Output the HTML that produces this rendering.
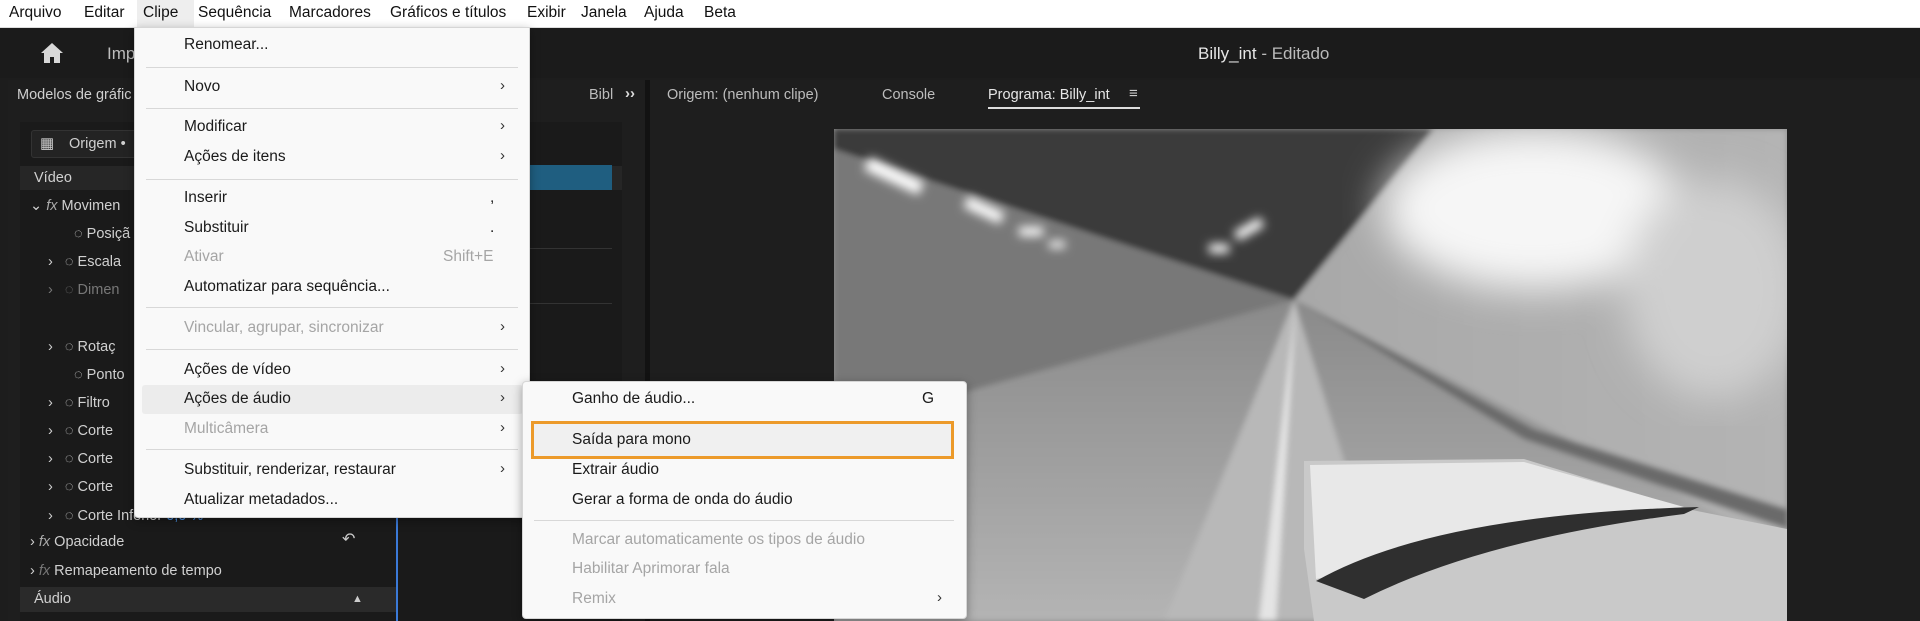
<!DOCTYPE html>
<html><head><meta charset="utf-8"><style>
*{margin:0;padding:0;box-sizing:border-box}
body{width:1920px;height:621px;overflow:hidden;background:#1d1d1d;font-family:"Liberation Sans",sans-serif;position:relative}
.a{position:absolute;white-space:nowrap;line-height:20px}
.mb{position:absolute;left:0;top:0;width:1920px;height:28px;background:#fff;border-bottom:1px solid #ddd}
.mb span{position:absolute;top:4px;font-size:15.5px;color:#111}
.menu{position:absolute;background:#f9f9f9;border:1px solid #d6d6d6;box-shadow:0 3px 10px rgba(0,0,0,.35);border-radius:4px}
.mi{position:absolute;font-size:15.5px;color:#1a1a1a;line-height:20px}
.dis{color:#a5a5a5}
.sep{position:absolute;height:1px;background:#d8d8d8}
.chev{position:absolute;font-size:15px;color:#333}
.lp{color:#d0d0d0;font-size:14.5px}
</style></head><body>
<div style="position:absolute;left:0;top:28px;width:1920px;height:50px;background:#1b1b1b"></div>
<svg class="a" style="left:40px;top:42px" width="24" height="22" viewBox="0 0 24 22"><path d="M12 1 L1 11 H4 V21 H10 V15 H14 V21 H20 V11 H23 Z" fill="#d8d8d8"/></svg>
<div class="a" style="left:107px;top:44px;color:#bdbdbd;font-size:17px">Imp</div>
<div class="a" style="left:1198px;top:44px;color:#e6e6e6;font-size:17px">Billy_int <span style="color:#bbb">- Editado</span></div>
<div style="position:absolute;left:8px;top:80px;width:640px;height:541px;background:#1e1e1e"></div>
<div style="position:absolute;left:20px;top:122px;width:602px;height:499px;background:#1a1a1a"></div>
<div style="position:absolute;left:650px;top:80px;width:1270px;height:541px;background:#1e1e1e"></div>
<div style="position:absolute;left:645px;top:80px;width:5px;height:541px;background:#121212"></div>
<div class="a" style="left:17px;top:85px;color:#cfcfcf;font-size:14.5px">Modelos de gráfic</div>
<div class="a" style="left:589px;top:85px;color:#bdbdbd;font-size:14.5px">Bibl</div>
<div class="a" style="left:625px;top:84px;color:#ddd;font-size:15px;font-weight:bold">››</div>
<div class="a" style="left:667px;top:85px;color:#bdbdbd;font-size:14.5px">Origem: (nenhum clipe)</div>
<div class="a" style="left:882px;top:85px;color:#bdbdbd;font-size:14.5px">Console</div>
<div class="a" style="left:988px;top:85px;color:#e6e6e6;font-size:14.5px">Programa: Billy_int</div>
<div class="a" style="left:1129px;top:84px;color:#ccc;font-size:15px">≡</div>
<div style="position:absolute;left:988px;top:107px;width:152px;height:2px;background:#ddd"></div>
<div style="position:absolute;left:31px;top:130px;width:170px;height:28px;background:#232323;border:1px solid #333;border-radius:3px"></div>
<div class="a" style="left:40px;top:134px;color:#ccc;font-size:15px">▦</div>
<div class="a lp" style="left:69px;top:134px">Origem • </div>
<div style="position:absolute;left:20px;top:166px;width:602px;height:24px;background:#262626"></div>
<div class="a lp" style="left:34px;top:168px">Vídeo</div>
<div class="a lp" style="left:30px;top:196px">⌄ <i style="color:#aaa">fx</i> Movimen</div>
<div class="a lp" style="left:74px;top:224px">◌ Posiçã</div>
<div class="a lp" style="left:48px;top:252px">›&nbsp;&nbsp; ◌ Escala</div>
<div class="a lp" style="left:48px;top:280px;color:#777">›&nbsp;&nbsp; ◌ Dimen</div>
<div class="a lp" style="left:48px;top:337px">›&nbsp;&nbsp; ◌ Rotaç</div>
<div class="a lp" style="left:74px;top:365px">◌ Ponto</div>
<div class="a lp" style="left:48px;top:393px">›&nbsp;&nbsp; ◌ Filtro</div>
<div class="a lp" style="left:48px;top:421px">›&nbsp;&nbsp; ◌ Corte</div>
<div class="a lp" style="left:48px;top:449px">›&nbsp;&nbsp; ◌ Corte</div>
<div class="a lp" style="left:48px;top:477px">›&nbsp;&nbsp; ◌ Corte</div>
<div class="a lp" style="left:48px;top:506px">›&nbsp;&nbsp; ◌ Corte Inferior <span style="color:#4a8fe0">0,0 %</span></div>
<div class="a lp" style="left:30px;top:532px">› <i style="color:#aaa">fx</i> Opacidade</div>
<div class="a" style="left:342px;top:530px;color:#ccc;font-size:16px">↶</div>
<div class="a lp" style="left:30px;top:561px">› <i style="color:#777">fx</i> Remapeamento de tempo</div>
<div style="position:absolute;left:20px;top:587px;width:378px;height:25px;background:#2a2a2a"></div>
<div class="a lp" style="left:34px;top:589px">Áudio</div>
<div class="a" style="left:352px;top:589px;color:#ccc;font-size:11px">▲</div>
<div style="position:absolute;left:396px;top:160px;width:2px;height:461px;background:#3b7ad8"></div>
<div style="position:absolute;left:400px;top:165px;width:212px;height:25px;background:#1f5e80"></div>
<div style="position:absolute;left:398px;top:248px;width:214px;height:1px;background:#333"></div>
<div style="position:absolute;left:398px;top:303px;width:214px;height:1px;background:#333"></div>
<svg style="position:absolute;left:834px;top:129px" width="953" height="492" viewBox="0 0 953 492">
<defs>
<filter id="b"><feGaussianBlur stdDeviation="5"/></filter>
<filter id="b2"><feGaussianBlur stdDeviation="20"/></filter>
<filter id="b3"><feGaussianBlur stdDeviation="3"/></filter>
<linearGradient id="rw" x1="0" y1="0" x2="1" y2="0"><stop offset="0" stop-color="#a8a8a8"/><stop offset="1" stop-color="#b4b4b4"/></linearGradient>
<linearGradient id="rd" x1="0" y1="0" x2="0" y2="1"><stop offset="0" stop-color="#8a8a8a"/><stop offset="1" stop-color="#b4b4b4"/></linearGradient>
</defs>
<rect width="953" height="492" fill="#8f8f8f"/>
<g filter="url(#b3)">
<polygon points="0,0 600,0 460,171 0,40" fill="#3a3a3a"/>
<polygon points="0,20 460,171 0,300" fill="#787878"/>
<polygon points="460,171 600,0 953,0 953,492" fill="url(#rw)"/>
<polygon points="460,171 0,300 0,492 953,492 953,420" fill="url(#rd)"/>
<polygon points="460,171 330,492 560,492" fill="#b8b8b8"/>
<polygon points="462,171 425,492 442,492" fill="#e4e4e4"/>
<polygon points="462,171 700,300 953,380 953,400 690,310" fill="#6a6a6a"/>
</g>
<g filter="url(#b2)"><ellipse cx="700" cy="80" rx="150" ry="80" fill="#f6f6f6"/><ellipse cx="880" cy="160" rx="90" ry="110" fill="#cfcfcf"/></g>
<g filter="url(#b)" fill="#fff"><rect x="30" y="40" width="60" height="14" transform="rotate(25 60 47)"/><rect x="130" y="75" width="40" height="12" transform="rotate(25 150 81)"/><rect x="185" y="98" width="24" height="9"/><rect x="215" y="112" width="16" height="7"/><rect x="400" y="95" width="30" height="10" transform="rotate(-30 415 100)"/><rect x="375" y="115" width="20" height="9"/></g>
<polygon points="470,332 690,330 853,380 953,400 953,492 480,492 470,420" fill="#c9c9c9"/>
<polygon points="476,336 690,333 850,378 700,392 570,432 482,450" fill="#e8e8e8"/>
<path d="M482 452 Q600 385 865 378 L850 385 Q650 410 530 470 Z" fill="#2f2f2f"/>
</svg>
<div style="position:absolute;left:1787px;top:129px;width:133px;height:492px;background:#1e1e1e"></div>
<div class="mb">
<span style="left:9px">Arquivo</span><span style="left:84px">Editar</span>
<span style="top:0;height:28px;width:57px;background:#eee;padding-top:4px;padding-left:6px;left:137px">Clipe</span>
<span style="left:198px">Sequência</span><span style="left:289px">Marcadores</span><span style="left:390px">Gráficos e títulos</span><span style="left:527px">Exibir</span><span style="left:581px">Janela</span><span style="left:644px">Ajuda</span><span style="left:704px">Beta</span>
</div>
<div class="menu" style="left:134px;top:27px;width:396px;height:491px;border-radius:0 0 4px 4px"></div>
<div style="position:absolute;left:142px;top:385px;width:381px;height:29px;background:#ececec;border-radius:3px"></div>
<div class="mi" style="left:184px;top:35px">Renomear...</div>
<div class="sep" style="left:146px;top:67px;width:372px"></div>
<div class="mi" style="left:184px;top:77px">Novo</div><div class="chev" style="left:500px;top:77px">›</div>
<div class="sep" style="left:146px;top:108px;width:372px"></div>
<div class="mi" style="left:184px;top:117px">Modificar</div><div class="chev" style="left:500px;top:117px">›</div>
<div class="mi" style="left:184px;top:147px">Ações de itens</div><div class="chev" style="left:500px;top:147px">›</div>
<div class="sep" style="left:146px;top:179px;width:372px"></div>
<div class="mi" style="left:184px;top:188px">Inserir</div><div class="mi" style="left:490px;top:188px">,</div>
<div class="mi" style="left:184px;top:218px">Substituir</div><div class="mi" style="left:490px;top:218px">.</div>
<div class="mi dis" style="left:184px;top:247px">Ativar</div><div class="mi dis" style="left:443px;top:247px">Shift+E</div>
<div class="mi" style="left:184px;top:277px">Automatizar para sequência...</div>
<div class="sep" style="left:146px;top:307px;width:372px"></div>
<div class="mi dis" style="left:184px;top:318px">Vincular, agrupar, sincronizar</div><div class="chev dis" style="left:500px;top:318px">›</div>
<div class="sep" style="left:146px;top:349px;width:372px"></div>
<div class="mi" style="left:184px;top:360px">Ações de vídeo</div><div class="chev" style="left:500px;top:360px">›</div>
<div class="mi" style="left:184px;top:389px">Ações de áudio</div><div class="chev" style="left:500px;top:389px">›</div>
<div class="mi dis" style="left:184px;top:419px">Multicâmera</div><div class="chev dis" style="left:500px;top:419px">›</div>
<div class="sep" style="left:146px;top:449px;width:372px"></div>
<div class="mi" style="left:184px;top:460px">Substituir, renderizar, restaurar</div><div class="chev" style="left:500px;top:460px">›</div>
<div class="mi" style="left:184px;top:490px">Atualizar metadados...</div>
<div class="menu" style="left:522px;top:381px;width:445px;height:238px"></div>
<div class="mi" style="left:572px;top:389px">Ganho de áudio...</div><div class="mi" style="left:922px;top:389px">G</div>
<div style="position:absolute;left:531px;top:421px;width:423px;height:38px;background:#f0f0f0;border:3px solid #ec9a2a"></div>
<div class="mi" style="left:572px;top:430px">Saída para mono</div>
<div class="mi" style="left:572px;top:460px">Extrair áudio</div>
<div class="mi" style="left:572px;top:490px">Gerar a forma de onda do áudio</div>
<div class="sep" style="left:534px;top:520px;width:420px"></div>
<div class="mi dis" style="left:572px;top:530px">Marcar automaticamente os tipos de áudio</div>
<div class="mi dis" style="left:572px;top:559px">Habilitar Aprimorar fala</div>
<div class="mi dis" style="left:572px;top:589px">Remix</div><div class="chev dis" style="left:937px;top:589px">›</div>
</body></html>
